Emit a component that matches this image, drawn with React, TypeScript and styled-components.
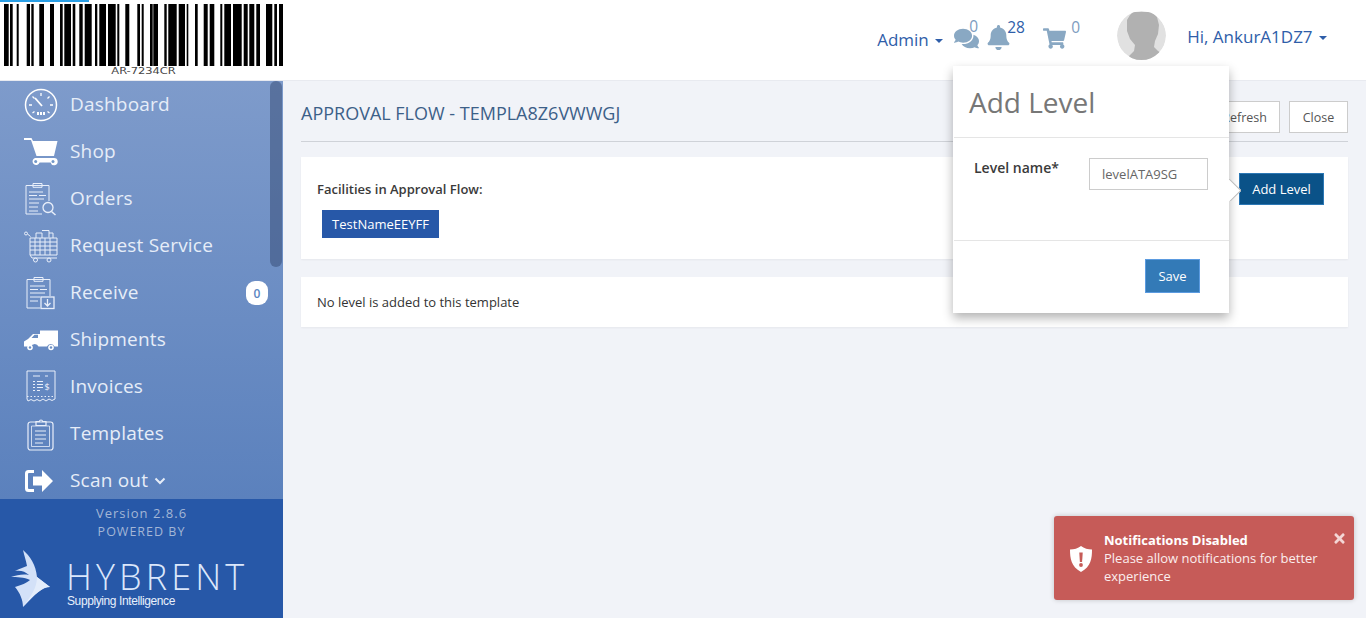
import React from "react";
import styled, { createGlobalStyle } from "styled-components";
import { FaBell, FaComments, FaShoppingCart, FaTimes } from "react-icons/fa";

const bars: [number, number][] = [
  [4, 8.7], [10, 12.7], [16.7, 18.7], [26.7, 30], [31.3, 33.7], [39.3, 44], [50, 54],
  [60, 62.7], [64.3, 71], [72.7, 75.3], [79.3, 82.7], [84.7, 91.7], [95, 97.3], [99.3, 106],
  [108, 115.7], [117.3, 119.3], [125.3, 129.3], [137.3, 140], [141.7, 143.7], [150, 152.7],
  [153.3, 158], [164.3, 166.7], [168.3, 176.7], [178.7, 185], [186.7, 188.3], [195, 197.7],
  [203.7, 207.7], [209.7, 214.3], [220.3, 222.3], [224.3, 231], [233, 241.7], [243.7, 247.7],
  [249.3, 254.3], [256.3, 260], [266, 272.3], [274.3, 277], [279, 283.3],
];

const DashboardIcon = () => (
  <svg width="34" height="34" viewBox="0 0 34 34" fill="none" stroke="#fff">
    <circle cx="17" cy="17" r="15.5" strokeWidth="1.5" />
    <path d="M17 5v3M8.5 8.5l2 2M25.5 8.5l-2 2M5 17h3M29 17h-3M8.5 25l2-1.500M25.500 25l-2-1.500" strokeWidth="1.300" />
    <path d="M11 10l7 8" strokeWidth="1.800" />
    <path d="M13 25.500h8" strokeWidth="3" strokeDasharray="2 1" />
  </svg>
);

const ShopIcon = () => (
  <svg width="34" height="34" viewBox="0 0 34 34" fill="#fff">
    <path d="M0 3h7.500l1.500 3h24.500l-3.500 15H12.500L7 5H0z" />
    <path d="M11 23h19a3.600 3.600 0 1 1-3.400 4.500h-11A3.600 3.600 0 1 1 11 23z" />
    <circle cx="11.700" cy="26.500" r="1.500" fill="#7298c9" />
    <circle cx="29" cy="26.500" r="1.500" fill="#7298c9" />
  </svg>
);

const OrdersIcon = () => (
  <svg width="34" height="34" viewBox="0 0 34 34" fill="none" stroke="#e9effa" strokeWidth="1">
    <path d="M18 32H2V3.500h23V19" />
    <path d="M9 3.500V1.500h9v2M9 3.500v1.800h9V3.500" />
    <path d="M5 10h14M5 13.500h8M15 13.500h7M5 17h15M5 21h10M5 25h9M5 29h9" />
    <circle cx="24" cy="25.500" r="5" strokeWidth="1.300" />
    <path d="M27.500 29.500l4 3.500" strokeWidth="1.500" />
  </svg>
);

const RequestIcon = () => (
  <svg width="34" height="34" viewBox="0 0 34 34" fill="none" stroke="#e9effa" strokeWidth="1">
    <circle cx="2" cy="4.500" r="1.500" />
    <path d="M3.500 5l3 2.500" />
    <path d="M6 9h27v17H6zM6 13h27M6 17h27M6 21h27M11 9v17M16 9v17M21 9v17M26 9v17" />
    <path d="M12 9V4h6v5M18 1.500h7v7M25 4h4v5" />
    <path d="M6 26l2 3h25" />
    <circle cx="11.500" cy="31" r="2" />
    <circle cx="25" cy="31" r="2" />
  </svg>
);

const ReceiveIcon = () => (
  <svg width="34" height="34" viewBox="0 0 34 34" fill="none" stroke="#e9effa" strokeWidth="1">
    <path d="M16 32H3V3.500h23V20" />
    <path d="M10 3.500V1.500h9v2M10 3.500v1.800h9V3.500" />
    <path d="M6 10h15M6 13.500h8M16 13.500h7M6 17h15M6 21h10M6 25h8" />
    <rect x="17" y="21" width="13" height="11.500" strokeWidth="1.300" />
    <path d="M23.500 23v7M20.500 27l3 3 3-3" strokeWidth="1.300" />
  </svg>
);

const TruckIcon = () => (
  <svg width="34" height="34" viewBox="0 0 34 34" fill="#fff">
    <path d="M16 7.500h18v16h-3.500a4 4 0 0 0-7.500 0h-8.500a4 4 0 0 0-7.500 0H0v-5l4-2.500 5-5h7z" />
    <path d="M7.500 15l3-3.300h3.500V15z" fill="#6a8ec3" />
    <circle cx="6" cy="24.500" r="2.800" />
    <circle cx="6" cy="24.500" r="1.200" fill="#6a8ec3" />
    <circle cx="27" cy="24.500" r="2.800" />
    <circle cx="27" cy="24.500" r="1.200" fill="#6a8ec3" />
  </svg>
);

const InvoiceIcon = () => (
  <svg width="34" height="34" viewBox="0 0 34 34" fill="none" stroke="#e9effa" strokeWidth="1">
    <path d="M3 29V1h28v28l-3 1.500-3-1.500-3 2-3-2-3 2-3-1.500-3 1.500-3-1.500-3 1.500z" />
    <path d="M9 6h7M21 6h3M9 11.500h2M13 11.500h6M9 14.500h2M13 14.500h6M9 17.500h2M13 17.500h6M9 20.500h2M13 20.500h3" />
    <path d="M3 26.500h28" strokeDasharray="1.500 2" />
    <text x="20.500" y="20" fontSize="9" fontFamily="Open Sans, sans-serif" fill="#e9effa" stroke="none">$</text>
  </svg>
);

const TemplateIcon = () => (
  <svg width="34" height="34" viewBox="0 0 34 34" fill="none" stroke="#e9effa" strokeWidth="1.200">
    <rect x="4" y="5" width="25" height="28" rx="2.500" />
    <path d="M7.500 9h18v20.500h-18z" strokeWidth="0.800" />
    <path d="M12 8.500V4.500h3.500a1.500 1.500 0 0 1 3 0H22v4z" />
    <path d="M11 14h11M11 18h11M11 22h11M11 26h8" />
  </svg>
);

const ScanOutIcon = () => (
  <svg width="34" height="34" viewBox="2 0 34 34" fill="#fff">
    <path d="M12 6H6.500A3.500 3.500 0 0 0 3 9.500v15A3.500 3.500 0 0 0 6.500 28H12v-3H7a1 1 0 0 1-1-1V10a1 1 0 0 1 1-1h5z" />
    <path d="M11 12.500h9V6l11 11-11 11v-6.500h-9z" />
  </svg>
);

const navItems = [
  { label: "Dashboard", icon: <DashboardIcon /> },
  { label: "Shop", icon: <ShopIcon /> },
  { label: "Orders", icon: <OrdersIcon /> },
  { label: "Request Service", icon: <RequestIcon /> },
  { label: "Receive", icon: <ReceiveIcon />, badge: "0" },
  { label: "Shipments", icon: <TruckIcon /> },
  { label: "Invoices", icon: <InvoiceIcon /> },
  { label: "Templates", icon: <TemplateIcon /> },
  { label: "Scan out", icon: <ScanOutIcon />, chevron: true },
];

const App = () => {
  return (
    <Page>
      <GlobalStyle />
      <Progress />
      <Header>
        <BarcodeBox>
          <svg width="283" height="66" viewBox="0 0 283 66">
            {bars.map(([a, b]) => (
              <rect key={a} x={a} y="4" width={b - a} height="62" fill="#000" />
            ))}
          </svg>
          <BarcodeText>AR-7234CR</BarcodeText>
        </BarcodeBox>
        <HeaderRight>
          <AdminLink>
            Admin <Caret />
          </AdminLink>
          <CommentsSlot>
            <FaComments size={25} />
            <Count $top={-9} $left={15}>0</Count>
          </CommentsSlot>
          <BellSlot>
            <FaBell size={25} />
            <Count $top={-7} $left={21} $dark>28</Count>
          </BellSlot>
          <CartSlot>
            <FaShoppingCart size={23} />
            <Count $top={-9} $left={28}>0</Count>
          </CartSlot>
          <Avatar>
            <svg width="49" height="49" viewBox="0 0 49 49">
              <circle cx="24.500" cy="24.500" r="24.500" fill="#e1e1e1" />
              <path
                d="M16 1L35 1L40 6L42 14L41 23L38 30L37 36L41 40L46 43L44 49H14L12 45L17 40L18 34L13 28L10 20L10 9L13 4Z"
                fill="#b1b1b1"
              />
            </svg>
          </Avatar>
          <UserLink>
            Hi, AnkurA1DZ7 <Caret />
          </UserLink>
        </HeaderRight>
      </Header>
      <Body>
        <Sidebar>
          <Nav>
            {navItems.map((item) => (
              <NavItem key={item.label}>
                <NavIcon>{item.icon}</NavIcon>
                <NavLabel>{item.label}</NavLabel>
                {item.chevron && (
                  <svg width="12" height="8" viewBox="0 0 12 8" fill="none" stroke="#e6edf8" strokeWidth="2">
                    <path d="M1.500 1.500L6 6l4.500-4.500" />
                  </svg>
                )}
                {item.badge && <Badge>{item.badge}</Badge>}
              </NavItem>
            ))}
            <Thumb />
          </Nav>
          <SideFooter>
            <Version>Version 2.8.6</Version>
            <Powered>POWERED BY</Powered>
            <Brand>
              <svg width="40" height="58" viewBox="0 0 40 58">
                <path
                  d="M12 0C19 6 25 15 26 27L39 37C31 37 24 44 12 57C12 50 9 43 4 37C10 35 16 33 19 30C13 27 6 27 0 27C6 25 12 24 18 25C14 21 9 20 4 21C8 19 13 17 16 16C15 10 13 5 12 0Z"
                  fill="#d3e1f8"
                />
                <path d="M26 27L39 37C31 37 24 44 12 57C20 46 26 38 26 27Z" fill="#e4edfb" />
              </svg>
              <BrandText>
                <BrandName>HYBRENT</BrandName>
                <BrandTag>Supplying Intelligence</BrandTag>
              </BrandText>
            </Brand>
          </SideFooter>
        </Sidebar>
        <Main>
          <TitleRow>
            <Title>APPROVAL FLOW - TEMPLA8Z6VWWGJ</Title>
            <TitleActions>
              <PlainButton>Refresh</PlainButton>
              <CloseButton>Close</CloseButton>
            </TitleActions>
          </TitleRow>
          <FacilityCard>
            <div>
              <FacilityLabel>Facilities in Approval Flow:</FacilityLabel>
              <Tag>TestNameEEYFF</Tag>
            </div>
            <AddButton>Add Level</AddButton>
          </FacilityCard>
          <EmptyCard>No level is added to this template</EmptyCard>
        </Main>
      </Body>
      <Popover>
        <PopoverTitle>Add Level</PopoverTitle>
        <PopoverBody>
          <FieldLabel>Level name*</FieldLabel>
          <FieldInput defaultValue="levelATA9SG" />
        </PopoverBody>
        <PopoverFooter>
          <SaveButton>Save</SaveButton>
        </PopoverFooter>
        <Arrow />
      </Popover>
      <Toast>
        <ToastShield width="24" height="26" viewBox="0 0 24 26">
          <path d="M12 0c3 2.500 7 3.500 11 3.500 0 9-1 17-11 22.500C2 20.500 1 12.500 1 3.500 5 3.500 9 2.500 12 0z" fill="#fff" />
          <path d="M10.300 6.500h3.400l-.6 9.500h-2.200z" fill="#c65b58" />
          <circle cx="12" cy="19" r="1.900" fill="#c65b58" />
        </ToastShield>
        <ToastText>
          <ToastTitle>Notifications Disabled</ToastTitle>
          Please allow notifications for better experience
        </ToastText>
        <ToastClose>
          <FaTimes size={15} />
        </ToastClose>
      </Toast>
    </Page>
  );
};

export default App;

const GlobalStyle = createGlobalStyle`
  html, body {
    margin: 0;
    padding: 0;
    overflow: hidden;
    font-family: "Open Sans", "Liberation Sans", sans-serif;
  }
  * {
    box-sizing: border-box;
  }
`;

const Page = styled.div`
  position: relative;
  width: 1366px;
  height: 618px;
  overflow: hidden;
  display: flex;
  flex-direction: column;
  background-color: #f1f3f8;
`;
const Progress = styled.div`
  position: absolute;
  top: 0;
  left: 0;
  width: 89px;
  height: 2px;
  background-color: #2a9fe6;
`;
const Header = styled.div`
  height: 81px;
  flex: none;
  background-color: #fff;
  border-bottom: 1px solid #e8eaf0;
  display: flex;
  justify-content: space-between;
`;
const BarcodeBox = styled.div`
  width: 283px;
  display: flex;
  flex-direction: column;
  align-items: center;
`;
const BarcodeText = styled.div`
  font-family: "DejaVu Sans", sans-serif;
  font-size: 8px;
  line-height: 9px;
  margin: 1px 0 0 4px;
  color: #444;
  transform: scaleX(1.43);
`;
const HeaderRight = styled.div`
  display: flex;
  align-items: flex-start;
  color: #2f5ea9;
  font-size: 17px;
`;
const AdminLink = styled.div`
  margin-top: 28px;
  line-height: 23px;
`;
const Caret = styled.span`
  display: inline-block;
  width: 0;
  height: 0;
  margin-left: 2px;
  vertical-align: middle;
  border-top: 4px solid #2f5ea9;
  border-left: 4px solid transparent;
  border-right: 4px solid transparent;
`;
const IconSlot = styled.div`
  position: relative;
  color: #89a8c3;
  line-height: 0;
`;
const CommentsSlot = styled(IconSlot)`
  margin: 26px 0 0 11px;
`;
const BellSlot = styled(IconSlot)`
  margin: 25px 0 0 7px;
`;
const CartSlot = styled(IconSlot)`
  margin: 27px 0 0 32px;
`;
const Count = styled.span<{ $top: number; $left: number; $dark?: boolean }>`
  position: absolute;
  top: ${(p) => p.$top}px;
  left: ${(p) => p.$left}px;
  font-size: 15.500px;
  line-height: 18px;
  color: ${(p) => (p.$dark ? "#2f5ea9" : "#7d9cc0")};
`;
const Avatar = styled.div`
  margin: 11px 0 0 51px;
  width: 49px;
  height: 49px;
  border-radius: 50%;
  overflow: hidden;
  line-height: 0;
`;
const UserLink = styled.div`
  margin: 25px 39px 0 21px;
  line-height: 23px;
`;
const Body = styled.div`
  flex: 1;
  min-height: 0;
  display: flex;
`;
const Sidebar = styled.div`
  width: 283px;
  flex: none;
  display: flex;
  flex-direction: column;
`;
const Nav = styled.div`
  position: relative;
  height: 418px;
  overflow: hidden;
  background: linear-gradient(180deg, #7e9bcb 0%, #5b81bd 100%);
`;
const Thumb = styled.div`
  position: absolute;
  top: 0;
  right: 1px;
  width: 12px;
  height: 186px;
  border-radius: 6px;
  background-color: rgba(45, 65, 105, 0.45);
`;
const NavItem = styled.div`
  height: 47px;
  padding-left: 24px;
  display: flex;
  align-items: center;
  position: relative;
  color: #e6edf8;
`;
const NavIcon = styled.div`
  width: 34px;
  height: 34px;
  margin-right: 12px;
  line-height: 0;
`;
const NavLabel = styled.span`
  font-size: 19px;
  letter-spacing: 0.2px;
  margin: 0 6px 2px 0;
`;
const Badge = styled.span`
  position: absolute;
  right: 15px;
  top: 12px;
  width: 22px;
  height: 24px;
  border-radius: 9px;
  background-color: #fff;
  color: #5b86c2;
  font-size: 12px;
  font-weight: 600;
  text-align: center;
  line-height: 26px;
`;
const SideFooter = styled.div`
  flex: 1;
  background-color: #2758a8;
  padding-top: 5px;
  display: flex;
  flex-direction: column;
`;
const Version = styled.div`
  text-align: center;
  font-size: 13px;
  line-height: 18px;
  letter-spacing: 1px;
  color: #a3b6d6;
`;
const Powered = styled(Version)`
  font-size: 12.500px;
  margin-top: 1px;
`;
const Brand = styled.div`
  margin: 9px 0 0 11px;
  display: flex;
`;
const BrandText = styled.div`
  margin: 7px 0 0 15px;
`;
const BrandName = styled.div`
  font-family: "Open Sans", sans-serif;
  font-weight: 300;
  font-size: 36px;
  line-height: 40px;
  letter-spacing: 4.100px;
  color: #dbe7fb;
`;
const BrandTag = styled.div`
  font-family: "Liberation Sans", sans-serif;
  font-size: 12px;
  line-height: 11px;
  margin: -1px 0 0 1px;
  letter-spacing: -0.400px;
  color: #e8f0fc;
`;
const Main = styled.div`
  flex: 1;
  min-width: 0;
  padding: 0 18px;
`;
const TitleRow = styled.div`
  height: 61px;
  border-bottom: 1px solid #cfd2d8;
  display: flex;
  justify-content: space-between;
  align-items: flex-start;
  padding-top: 20px;
`;
const Title = styled.div`
  font-size: 18px;
  line-height: 24px;
  color: #3c6088;
`;
const TitleActions = styled.div`
  display: flex;
  gap: 9px;
`;
const PlainButton = styled.button`
  height: 32px;
  padding: 0 12px;
  font-family: inherit;
  font-size: 12.500px;
  color: #555;
  background-color: #fff;
  border: 1px solid #ccc;
`;
const CloseButton = styled(PlainButton)`
  width: 59px;
  padding: 0;
`;
const Card = styled.div`
  background-color: #fff;
  box-shadow: 0 1px 2px rgba(0, 0, 0, 0.05);
`;
const FacilityCard = styled(Card)`
  margin-top: 15px;
  height: 102px;
  padding: 24px 24px 0 16px;
  display: flex;
  justify-content: space-between;
  align-items: flex-start;
`;
const FacilityLabel = styled.div`
  font-size: 13px;
  font-weight: 600;
  line-height: 17px;
  color: #3a3a3a;
`;
const Tag = styled.div`
  display: inline-block;
  margin: 12px 0 0 5px;
  height: 28px;
  width: 117px;
  text-align: center;
  background-color: #2758a8;
  color: #fff;
  font-size: 13px;
  font-weight: 500;
  line-height: 28px;
`;
const AddButton = styled.button`
  margin-top: -8px;
  width: 85px;
  height: 32px;
  font-family: inherit;
  font-size: 13px;
  font-weight: 500;
  color: #fff;
  background-color: #0a5288;
  border: 1px solid #2c78b5;
`;
const EmptyCard = styled(Card)`
  margin-top: 18px;
  height: 50px;
  padding-left: 16px;
  display: flex;
  align-items: center;
  font-size: 13px;
  color: #333;
`;
const Popover = styled.div`
  position: absolute;
  left: 953px;
  top: 66px;
  width: 276px;
  height: 247px;
  display: flex;
  flex-direction: column;
  background-color: #fff;
  box-shadow: 0 5px 10px rgba(0, 0, 0, 0.3);
`;
const PopoverTitle = styled.div`
  height: 72px;
  margin-left: 1px;
  padding: 14px 0 0 15px;
  border-bottom: 1px solid #e5e5e5;
  font-size: 28px;
  line-height: 44px;
  color: #777;
`;
const PopoverBody = styled.div`
  height: 103px;
  margin-left: 1px;
  padding: 20px 21px 0 20px;
  border-bottom: 1px solid #e5e5e5;
  display: flex;
  justify-content: space-between;
  align-items: flex-start;
`;
const FieldLabel = styled.label`
  font-size: 14px;
  font-weight: 600;
  line-height: 19px;
  color: #3a3a3a;
`;
const FieldInput = styled.input`
  width: 119px;
  height: 32px;
  padding: 0 12px;
  border: 1px solid #ccc;
  font-family: inherit;
  font-size: 13px;
  color: #666;
  outline: none;
`;
const PopoverFooter = styled.div`
  padding: 18px 29px 0 0;
  display: flex;
  justify-content: flex-end;
`;
const SaveButton = styled.button`
  width: 55px;
  height: 34px;
  font-family: inherit;
  font-size: 13px;
  font-weight: 500;
  color: #fff;
  background-color: #337ab7;
  border: 1px solid #5b9be0;
`;
const Arrow = styled.div`
  position: absolute;
  left: 100%;
  top: 113px;
  width: 12px;
  height: 22px;
  overflow: hidden;
  &::after {
    content: "";
    position: absolute;
    left: -8px;
    top: 3px;
    width: 16px;
    height: 16px;
    background-color: #fff;
    border-top: 1px solid #bbb;
    border-right: 1px solid #bbb;
    transform: rotate(45deg);
  }
`;
const Toast = styled.div`
  position: absolute;
  left: 1054px;
  top: 516px;
  width: 300px;
  height: 84px;
  padding: 15px 28px 0 15px;
  display: flex;
  gap: 11px;
  align-items: flex-start;
  border-radius: 3px;
  background-color: #c65b58;
  box-shadow: 0 0 5px rgba(0, 0, 0, 0.2);
  color: #fbeeee;
  font-size: 13px;
  line-height: 18px;
`;
const ToastShield = styled.svg`
  margin-top: 15px;
  flex: none;
`;
const ToastText = styled.div`
  flex: 1;
`;
const ToastTitle = styled.div`
  font-weight: 700;
  color: #fff;
`;
const ToastClose = styled.span`
  position: absolute;
  top: 15px;
  right: 7px;
  color: #f3d6d5;
  line-height: 0;
`;
